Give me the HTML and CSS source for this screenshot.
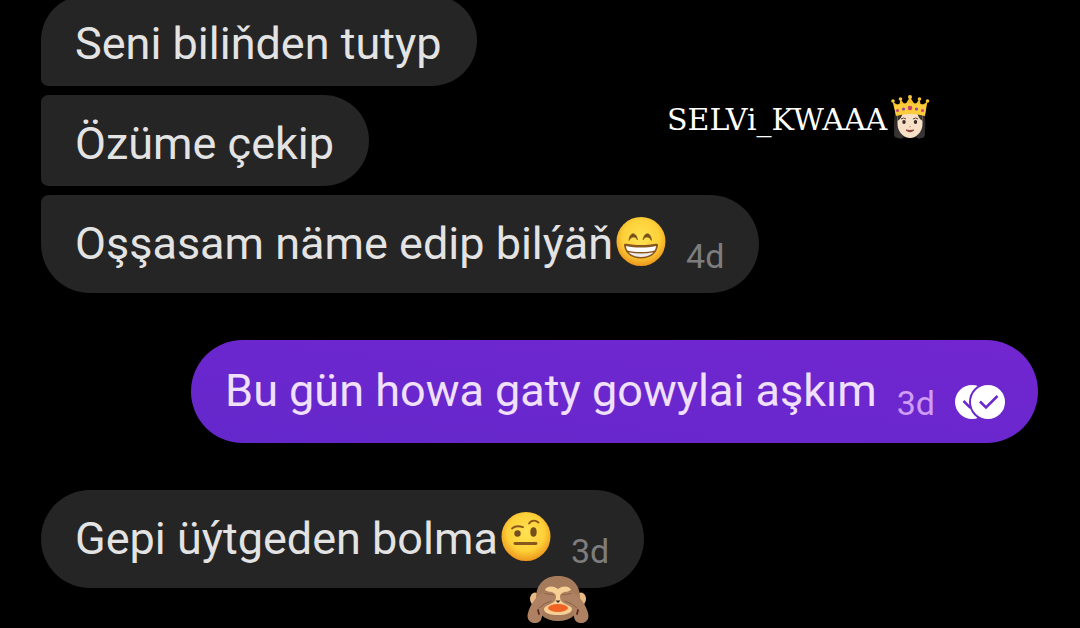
FILE: index.html
```html
<!DOCTYPE html>
<html lang="tk">
<head>
    <meta charset="UTF-8">
    <meta name="viewport" content="width=device-width, initial-scale=1">
    <title>Chat</title>
    <link rel="stylesheet" href="styles.css">
</head>
<body>

<main class="chat">
    <div class="group">
        <div class="bubble first"><p class="text">Seni biliňden tutyp</p></div>
        <div class="bubble middle"><p class="text">Özüme çekip</p></div>
        <div class="bubble last">
            <p class="text">Oşşasam näme edip bilýäň</p>
            <svg class="emoji" viewBox="0 0 50 50" role="img" aria-label="grinning face">
                <defs>
                    <radialGradient id="face" cx="50%" cy="42%" r="58%">
                        <stop offset="0" stop-color="#ffe253"/>
                        <stop offset="0.65" stop-color="#fdd038"/>
                        <stop offset="1" stop-color="#ed961c"/>
                    </radialGradient>
                </defs>
                <circle cx="25" cy="24.5" r="24.5" fill="url(#face)"/>
                <path d="M13 23.500c.5-9 7.500-9 8.500-.5-2-4-6-4-8.500.5zM27 23c1-8.500 8-8.500 8.500.5-2.500-4.500-6.500-4.500-8.500-.5z" fill="#76501b" stroke="#76501b" stroke-width=".6"/>
                <path d="M8 28.500c-.3-1.700 1-2 2.500-1.700 9 1.600 20 1.600 29 0 1.500-.3 2.800 0 2.500 1.700C41 37 34 41.500 25 41.500S9 37 8 28.500z" fill="#8a5620"/>
                <path d="M10 29c9 2 21 2 30 0-.2 2-.8 3.500-1.500 4.500-8 2-19 2-27 0C10.800 32.500 10.200 31 10 29z" fill="#fff"/>
                <path d="M12.500 35.300c8 1.600 17 1.600 25 0C34.500 38.500 30 40 25 40s-9.500-1.500-12.500-4.700z" fill="#eeecea"/>
            </svg>
            <time class="time">4d</time>
        </div>
    </div>

    <div class="group sent">
        <div class="bubble">
            <p class="text">Bu gün howa gaty gowylai aşkım</p>
            <time class="time">3d</time>
            <svg class="receipt" viewBox="0 0 50 34" role="img" aria-label="Read">
                <circle cx="17" cy="17" r="17" fill="#fff"/>
                <path d="M8.500 16l6 6 6-6" fill="none" stroke="#6b28cd" stroke-width="2.500"/>
                <circle cx="33" cy="17" r="18" fill="#fff" stroke="#6b28cd" stroke-width="2"/>
                <path d="M25 16.500l6 6 11.500-11.500" fill="none" stroke="#6b28cd" stroke-width="2.500"/>
            </svg>
        </div>
    </div>

    <div class="group">
        <div class="bubble">
            <p class="text">Gepi üýtgeden bolma</p>
            <svg class="emoji" viewBox="0 0 50 50" role="img" aria-label="raised eyebrow">
                <circle cx="25" cy="24.500" r="24.500" fill="url(#face)"/>
                <ellipse cx="16.500" cy="21.500" rx="3.200" ry="3.200" fill="#76501b"/>
                <ellipse cx="32.500" cy="20" rx="3.200" ry="4.700" fill="#76501b"/>
                <path d="M11 16.500c3-2.800 6.500-2.800 11-1.300M28 11.500c1.800-3 6-4 9.500-1" fill="none" stroke="#8a571c" stroke-width="1.800" stroke-linecap="round"/>
                <path d="M14 31.500h21" stroke="#86581c" stroke-width="2.800" stroke-linecap="round"/>
            </svg>
            <time class="time">3d</time>
        </div>
    </div>

    <!-- stickers over the chat -->
    <div class="name">
        <span>SELVi_KWAAA</span>
        <svg class="queen" viewBox="0 0 39 44" role="img" aria-label="princess">
            <path d="M4 17C3 27 2 36 4 42.500h29c2-7 1.500-16 .5-25z" fill="#2d2a2a"/>
            <path d="M3 40c3 4 7 4 9 3L7 26zM34 40c-2 4-6 4-8 3l5-17z" fill="#383434"/>
            <path d="M6.500 18h25v11c0 8-6.500 14-12.500 14S6.500 37 6.500 29z" fill="#f8dfc7"/>
            <path d="M6.500 19h5c-1 3-2 5-5 7zM31.500 19h-5c1 3 2 5 5 7z" fill="#3a302d"/>
            <path d="M10 24q3-2 5 0M22 24q3-2 5 0" fill="none" stroke="#57443b"/>
            <ellipse cx="13" cy="27" rx="1.700" ry="2" fill="#382a25"/>
            <ellipse cx="24.500" cy="27" rx="1.700" ry="2" fill="#382a25"/>
            <path d="M18 31.500q1 1 2 0" fill="none" stroke="#d2a28b"/>
            <path d="M15 35q4 3.500 8 0-4 1-8 0z" fill="#8d4036" stroke="#8d4036"/>
            <path d="M1.500 6.500 8 11l1.500-7 4.500 6 5-8 5 8 4.500-6 1.500 7 6.500-4.500L34 20q-15-5-29 0z" fill="#f4bd27"/>
            <path d="M3 10q16-4 32 0l-1 11q-15-4-29 0z" fill="#fbcc3b"/>
            <g fill="#f5c53c"><circle cx="2" cy="6" r="1.800"/><circle cx="9.500" cy="4" r="1.800"/><circle cx="19" cy="2" r="2"/><circle cx="28.500" cy="4" r="1.800"/><circle cx="36.500" cy="6" r="1.800"/></g>
            <g fill="#c94170"><circle cx="19" cy="13" r="2.300"/><circle cx="6.500" cy="15.500" r="1.500"/><circle cx="31.500" cy="15.500" r="1.500"/></g>
            <g fill="#8e4ba2"><circle cx="12.500" cy="14" r="1.600"/><circle cx="25.500" cy="14" r="1.600"/></g>
        </svg>
    </div>
    <svg class="monkey" viewBox="0 0 62 50" role="img" aria-label="see-no-evil monkey">
        <ellipse cx="8" cy="24" rx="5" ry="6.500" fill="#e6b985"/>
        <ellipse cx="54" cy="24" rx="5" ry="6.500" fill="#e6b985"/>
        <path d="M9 23C9 8 19 1 31 1s22 7 22 22c0 15-8 23-22 23S9 38 9 23z" fill="#a67b5b"/>
        <path d="M18 15c1-4 8-5 13-1 5-4 12-3 13 1l-8 4-1 8c6 1 10 3 10 7 0 4-6 6-14 6s-14-2-14-6c0-4 4-6 10-7l-1-8z" fill="#f6cf95"/>
        <path d="M1 38c2-8 8-17 15-20 5-2 13-2 13 4 0 6-7 7-11 10-3 3-2 8-4 13-4 6-16 3-13-7z" fill="#ad8161"/>
        <path d="M61 38c-2-8-8-17-15-20-5-2-13-2-13 4 0 6 7 7 11 10 3 3 2 8 4 13 4 6 16 3 13-7z" fill="#ad8161"/>
        <ellipse cx="31" cy="33" rx="10" ry="4" fill="#ef6325"/>
        <path d="M18 18.500l9 1.500M44 18.500l-9 1.500M12 33q5-5 12-7M50 33q-5-5-12-7" fill="none" stroke="#8b6347" stroke-linecap="round"/>
        <path d="M11 35l1 4M51 35l-1 4" stroke="#5c2620" stroke-width="1.800" stroke-linecap="round"/>
        <path d="M28.500 25.500l2.500 2.500 2.500-2.500z" fill="#3d2b23"/>
    </svg>
</main>

</body>
</html>
```
FILE: styles.css
```css
* { box-sizing: border-box; }
html { background: #000; }
body { margin: 0; font-family: Roboto, "Noto Sans", sans-serif; }

.chat { position: relative; display: flex; flex-direction: column; gap: 47px; min-height: 100vh; padding: 0 42px 0 41px; margin-top: -5px; }
.group { display: flex; flex-direction: column; align-items: flex-start; gap: 9px; }
.sent { align-items: flex-end; }

.bubble { display: flex; align-items: flex-start; padding: 22px 35px 16px 34px; border-radius: 50px; background: #252525; color: #e3e3e3; }
.first { border-bottom-left-radius: 8px; }
.middle { border-top-left-radius: 8px; border-bottom-left-radius: 8px; }
.last { border-top-left-radius: 8px; }
.sent .bubble { padding: 24px 33px 19px 34px; border-radius: 52px; background: linear-gradient(to top right, #6428cb, #7226d0); color: #f0e0fc; }

.text { margin: 0; font-size: 45px; line-height: 53px; white-space: nowrap; }
.time { margin: 18px 0 0 20px; font-size: 34px; line-height: 42px; color: #7d7d7d; }
.sent .time { color: #cf9df5; }
.emoji { width: 50px; height: 50px; flex: none; margin-left: 3px; }
.receipt { width: 50px; height: 34px; flex: none; margin: 21px 0 0 20px; overflow: hidden; }

.name { position: absolute; left: 667px; top: 100px; display: flex; align-items: flex-start; gap: 4px; color: #fff; font-family: "DejaVu Serif", serif; font-size: 30px; line-height: 50px; }
.queen { width: 39px; height: 44px; }
.monkey { position: absolute; left: 527px; top: 580px; width: 62px; height: 50px; }
```
